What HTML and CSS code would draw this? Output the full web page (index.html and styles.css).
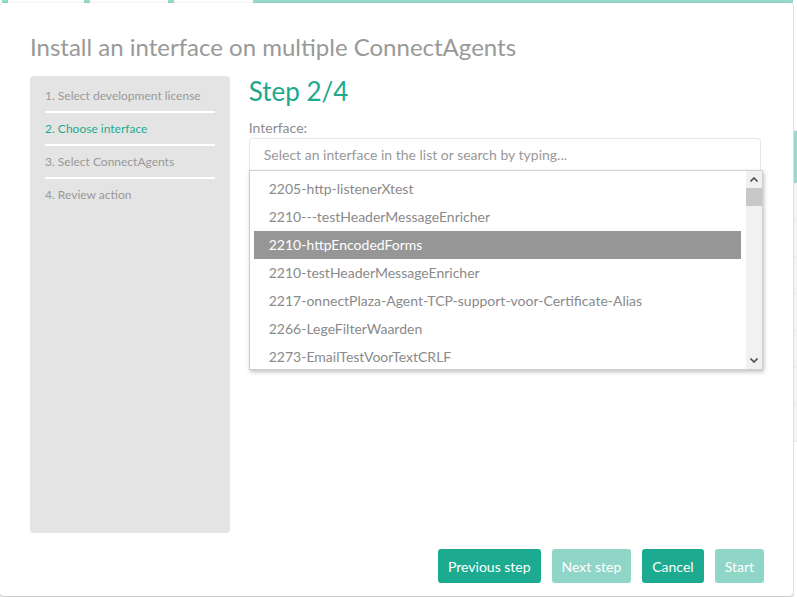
FILE: index.html
```html
<!DOCTYPE html>
<html lang="en">
<head>
  <meta charset="UTF-8">
  <title>Install an interface on multiple ConnectAgents</title>
  <link rel="stylesheet" href="styles.css">
</head>
<body>

<!-- Tabs behind the dialog -->
<div class="tabbar">
  <span class="tab tab-1"></span>
  <span class="tab tab-2"></span>
  <span class="tab tab-3"></span>
  <span class="tab tab-4"></span>
</div>

<div class="stage">

  <div class="modal">
    <h1 class="modal-title">Install an interface on multiple ConnectAgents</h1>

    <div class="modal-body">
      <!-- Wizard steps -->
      <ul class="steps">
        <li>1. Select development license</li>
        <li class="step-active">2. Choose interface</li>
        <li>3. Select ConnectAgents</li>
        <li>4. Review action</li>
      </ul>

      <div class="main">
        <h2 class="step-title">Step 2/4</h2>
        <div class="field-label">Interface:</div>

        <div class="picker">
          <div class="picker-input">Select an interface in the list or search by typing...</div>
          <div class="listbox">
            <ul class="options">
              <li>2205-http-listenerXtest</li>
              <li>2210---testHeaderMessageEnricher</li>
              <li class="option-hover">2210-httpEncodedForms</li>
              <li>2210-testHeaderMessageEnricher</li>
              <li>2217-onnectPlaza-Agent-TCP-support-voor-Certificate-Alias</li>
              <li>2266-LegeFilterWaarden</li>
              <li>2273-EmailTestVoorTextCRLF</li>
            </ul>
            <div class="scrollbar">
              <span class="sb-arrow">
                <svg width="8" height="5" viewBox="0 0 8 5"><path d="M0.5 4.5 L4 1 L7.5 4.5" fill="none" stroke="#505050" stroke-width="1.6"/></svg>
              </span>
              <div class="sb-track"><div class="sb-thumb"></div></div>
              <span class="sb-arrow">
                <svg width="8" height="5" viewBox="0 0 8 5"><path d="M0.5 0.5 L4 4 L7.5 0.5" fill="none" stroke="#505050" stroke-width="1.6"/></svg>
              </span>
            </div>
          </div>
        </div>
      </div>
    </div>

    <div class="modal-footer">
      <button class="btn">Previous step</button>
      <button class="btn btn-disabled">Next step</button>
      <button class="btn">Cancel</button>
      <button class="btn btn-disabled">Start</button>
    </div>
  </div>

  <!-- Stuk pagina rechts naast de dialoog -->
  <div class="backdrop-strip">
    <div class="strip-top"></div>
    <div class="strip-accent"></div>
    <div class="strip-row"></div>
    <div class="strip-row"></div>
    <div class="strip-row"></div>
    <div class="strip-row"></div>
    <div class="strip-row"></div>
    <div class="strip-row"></div>
    <div class="strip-row"></div>
  </div>

</div>

</body>
</html>
```

FILE: styles.css
```css
/* =====================
   Colours
   ===================== */
:root {
  --color-teal: #1cab90;
  --color-teal-light: #8fd6c8;
  --color-tab: #97d9cb;
  --color-grey-text: #999999;
  --color-list-text: #8a8a8a;
  --color-sidebar-bg: #e4e4e4;
  --color-border: #d6d6d6;
}

/* =====================
   Base
   ===================== */
body {
  margin: 0;
  padding: 0;
  font-family: Lato, "Open Sans", sans-serif;
  background-color: #fafafa;
  overflow: hidden;
}

.tabbar {
  display: flex;
  height: 3px;
  background-color: #ffffff;
}

.tab {
  height: 3px;
  background-color: var(--color-tab);
}

.tab-1 { width: 6px;  margin-left: 2px; }
.tab-2 { width: 6px;  margin-left: 76px; }
.tab-3 { width: 6px;  margin-left: 78px; }
.tab-4 { width: 540px; margin-left: 79px; }

.stage {
  display: flex;
  height: 594px;
}

/* =====================
   Dialog
   ===================== */
.modal {
  width: 793px;
  height: 593px;
  box-sizing: border-box;
  padding: 30px 29px 0 30px;
  background-color: #ffffff;
  border-radius: 4px;
  box-shadow: 0 1px 3px rgba(0,0,0,0.3);
  display: flex;
  flex-direction: column;
}

.modal-title {
  margin: 0 0 15px 0;
  font-size: 24px;
  line-height: 28px;
  font-weight: normal;
  color: var(--color-grey-text);
}

.modal-body {
  display: flex;
  gap: 19px;
  height: 457px;
}

/* Wizard steps */
.steps {
  list-style: none;
  margin: 0;
  width: 200px;
  box-sizing: border-box;
  padding: 4px 15px 0 15px;
  background-color: var(--color-sidebar-bg);
  border-radius: 4px;
}

.steps li {
  padding: 6px 0 5px 0;
  font-size: 12px;
  line-height: 20px;
  color: var(--color-grey-text);
  border-bottom: 2px solid #ffffff;
}

.steps li:last-child {
  border-bottom: none;
}

.steps .step-active {
  color: var(--color-teal);
}

/* Main column */
.main {
  width: 516px;
}

.step-title {
  margin: 0 0 13px 0;
  font-size: 26px;
  line-height: 30px;
  font-weight: normal;
  color: #20a88d;
}

.field-label {
  font-size: 14px;
  line-height: 17px;
  color: #8c8c8c;
  margin-bottom: 2px;
}

.picker-input {
  width: 512px;
  height: 32px;
  box-sizing: border-box;
  padding: 6px 14px 0 14px;
  border: 1px solid #e8e8e8;
  border-bottom: none;
  border-radius: 4px 4px 0 0;
  font-size: 14px;
  line-height: 20px;
  color: var(--color-grey-text);
}

.listbox {
  display: flex;
  width: 514px;
  height: 200px;
  box-sizing: border-box;
  border: 1px solid #cfcfcf;
  background-color: #ffffff;
  box-shadow: 1px 2px 4px rgba(0,0,0,0.25);
}

.options {
  flex: 1;
  list-style: none;
  margin: 0;
  padding: 4px 5px 0 4px;
  overflow: hidden;
}

.options li {
  height: 28px;
  padding-left: 15px;
  font-size: 14px;
  line-height: 28px;
  color: var(--color-list-text);
  white-space: nowrap;
}

.options .option-hover {
  background-color: #969696;
  color: #ffffff;
}

/* Scrollbar */
.scrollbar {
  width: 16px;
  display: flex;
  flex-direction: column;
  background-color: #f1f1f1;
}

.sb-arrow {
  height: 17px;
  display: flex;
  align-items: center;
  justify-content: center;
}

.sb-track {
  flex: 1;
}

.sb-thumb {
  height: 18px;
  background-color: #c8c8c8;
}

/* Footer buttons */
.modal-footer {
  display: flex;
  justify-content: flex-end;
  gap: 11px;
  margin-top: 16px;
}

.btn {
  height: 34px;
  padding: 1px 10px 0 10px;
  border: none;
  border-radius: 3px;
  background-color: var(--color-teal);
  color: #ffffff;
  font-family: Lato, "Open Sans", sans-serif;
  font-size: 14px;
  line-height: 33px;
  cursor: pointer;
}

.btn-disabled {
  background-color: var(--color-teal-light);
  cursor: default;
}

/* =====================
   Page next to the dialog
   ===================== */
.backdrop-strip {
  flex: 1;
  margin-left: 1px;
  display: flex;
  flex-direction: column;
  background-color: #ffffff;
}

.strip-top {
  height: 127px;
  border-bottom: 1px solid #eeeeee;
}

.strip-accent {
  height: 52px;
  background-color: var(--color-tab);
}

.strip-row {
  height: 36px;
  border-bottom: 1px solid #eeeeee;
  background-color: #f4f4f4;
}
```
